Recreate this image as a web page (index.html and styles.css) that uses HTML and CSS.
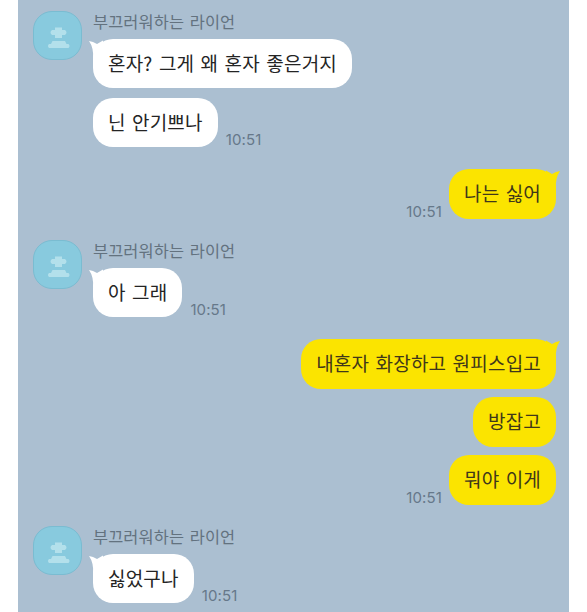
FILE: index.html
```
<!DOCTYPE html>
<html lang="ko">
  <head>
    <meta charset="UTF-8" />
    <meta name="viewport" content="width=device-width, initial-scale=1.0" />
    <title>채팅</title>
    <link rel="stylesheet" href="styles.css">
  </head>
  <body>
    <svg class="symbols" width="0" height="0">
      <symbol id="person" viewBox="0 0 47 47">
        <path d="M21 15.500h7v2.500h3q3 2.500 0 5h-3v3h-7v-3h-3q-3-2.500 0-5h3z" />
        <path d="M18.500 29h12.500l1.500 3h2q2 2 0 4H15q-2-2 0-4h2z" />
      </symbol>
      <symbol id="tail" viewBox="0 0 18 20">
        <path d="M0 2Q4 2.500 8 5L14 1.500V12L4 20Q5 9 0 2z" />
      </symbol>
    </svg>
    <div class="chat">
      <div class="group">
        <div class="avatar"><svg><use href="#person" /></svg></div>
        <div class="messages">
          <div class="name">부끄러워하는 라이언</div>
          <div class="row">
            <div class="bubble"><svg class="tail"><use href="#tail" /></svg>혼자? 그게 왜 혼자 좋은거지</div>
          </div>
          <div class="row">
            <div class="bubble">닌 안기쁘나</div>
            <div class="time">10:51</div>
          </div>
        </div>
      </div>

      <div class="group mine">
        <div class="row">
          <div class="time">10:51</div>
          <div class="bubble"><svg class="tail"><use href="#tail" /></svg>나는 싫어</div>
        </div>
      </div>

      <div class="group">
        <div class="avatar"><svg><use href="#person" /></svg></div>
        <div class="messages">
          <div class="name">부끄러워하는 라이언</div>
          <div class="row">
            <div class="bubble"><svg class="tail"><use href="#tail" /></svg>아 그래</div>
            <div class="time">10:51</div>
          </div>
        </div>
      </div>

      <div class="group mine">
        <div class="row">
          <div class="bubble"><svg class="tail"><use href="#tail" /></svg>내혼자 화장하고 원피스입고</div>
        </div>
        <div class="row">
          <div class="bubble">방잡고</div>
        </div>
        <div class="row">
          <div class="time">10:51</div>
          <div class="bubble">뭐야 이게</div>
        </div>
      </div>

      <div class="group">
        <div class="avatar"><svg><use href="#person" /></svg></div>
        <div class="messages">
          <div class="name">부끄러워하는 라이언</div>
          <div class="row">
            <div class="bubble"><svg class="tail"><use href="#tail" /></svg>싫었구나</div>
            <div class="time">10:51</div>
          </div>
        </div>
      </div>
    </div>
  </body>
</html>
```
FILE: styles.css
```
* {
  margin: 0;
  padding: 0;
  box-sizing: border-box;
}

body {
  background: #fff;
  font-family: "Noto Sans CJK KR", sans-serif;
  overflow: hidden;
}

.symbols {
  position: absolute;
}

.chat {
  display: flex;
  flex-direction: column;
  gap: 21px;
  width: 551px;
  height: 612px;
  margin-left: 18px;
  padding: 11px 13px 0 15px;
  background: #abbfd1;
  overflow: hidden;
}

.group {
  display: flex;
  flex-shrink: 0;
  gap: 11px;
}

.messages {
  display: flex;
  flex-direction: column;
  gap: 10px;
}

.mine {
  flex-direction: column;
  gap: 8px;
  margin-top: 1px;
}

.avatar {
  width: 49px;
  height: 49px;
  border: 1px solid #7abcd1;
  border-radius: 19px;
  background: #88cade;
}

.avatar svg {
  display: block;
  width: 47px;
  height: 47px;
  fill: #b3e0eb;
}

.name {
  height: 19px;
  margin-bottom: -1px;
  font-size: 16.400px;
  letter-spacing: 0.100px;
  word-spacing: 1px;
  line-height: 21px;
  color: #63727f;
  white-space: nowrap;
}

.row {
  display: flex;
  align-items: flex-end;
  gap: 8px;
}

.mine .row {
  justify-content: flex-end;
  gap: 7px;
}

.bubble {
  position: relative;
  height: 49px;
  padding: 0 15px;
  border-radius: 20px;
  background: #fff;
  font-size: 19px;
  letter-spacing: 0.200px;
  word-spacing: 0.800px;
  line-height: 47px;
  color: #242424;
  white-space: nowrap;
}

.mine .bubble {
  height: 50px;
  line-height: 48px;
  background: #fbe400;
  color: #40371a;
}

.tail {
  position: absolute;
  top: 0;
  left: -4px;
  width: 18px;
  height: 20px;
  fill: #fff;
}

.mine .tail {
  left: auto;
  right: -4px;
  fill: #fbe400;
  transform: scaleX(-1);
}

.time {
  height: 15px;
  font-family: Inter, sans-serif;
  font-size: 15px;
  letter-spacing: 0.100px;
  line-height: 15px;
  color: #66788a;
}
```
